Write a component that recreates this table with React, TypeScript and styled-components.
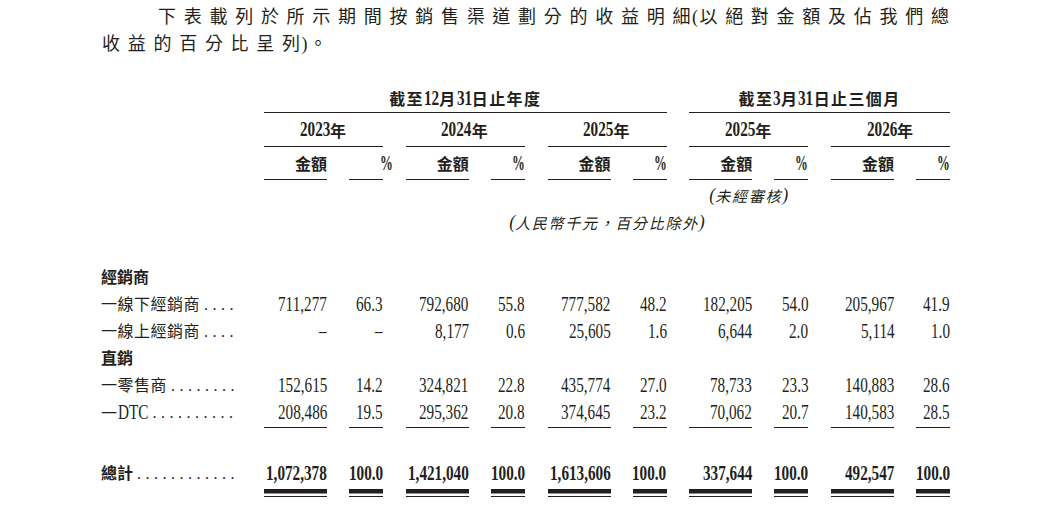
import React from 'react';
import styled, { createGlobalStyle, css } from 'styled-components';

const INK = '#231f20';
const FONT = `"Liberation Serif", "Noto Sans CJK TC", "Noto Sans CJK SC", serif`;

const GlobalStyle = createGlobalStyle`
  html, body { margin: 0; padding: 0; background: #ffffff; }
  body { font-family: ${FONT}; color: ${INK}; }
`;

const Page = styled.main`
  width: 1057px;
  height: 515px;
  box-sizing: border-box;
  padding: 4px 0 0 101px;
  overflow: hidden;
`;

const Intro = styled.p`
  margin: 0;
  padding-left: 1px;
  font-size: 18px;
  line-height: 27px;
  letter-spacing: 7.72px;
  text-indent: 56px;
  white-space: nowrap;
`;

const TightMark = styled.span`
  letter-spacing: 1.5px;
`;

const Table = styled.section`
  margin-top: 26px;
`;

const Row = styled.div<{ $h: number; $mt?: number }>`
  display: grid;
  grid-template-columns: 140.25px repeat(5, 119px);
  column-gap: 22.75px;
  height: ${(p) => p.$h}px;
  margin-top: ${(p) => p.$mt ?? 0}px;
`;

const Blank = styled.div``;

const HeadCell = styled.div<{ $col?: string }>`
  grid-column: ${(p) => p.$col ?? 'auto'};
  box-sizing: border-box;
  border-bottom: 1px solid ${INK};
  display: flex;
  align-items: center;
  justify-content: center;
  font-weight: 700;
  font-size: 16px;
  letter-spacing: 1.4px;
  white-space: nowrap;
`;

const Group = styled.div<{ $top?: boolean }>`
  display: flex;
  justify-content: space-between;
  align-items: ${(p) => (p.$top ? 'flex-start' : 'stretch')};
`;

const SubHead = styled.div<{ $w: number }>`
  width: ${(p) => p.$w}px;
  box-sizing: border-box;
  border-bottom: 1px solid ${INK};
  display: flex;
  align-items: center;
  justify-content: flex-end;
  font-weight: 700;
  font-size: 16px;
`;

const Nudge = styled.span<{ $by: number }>`
  display: inline-flex;
  margin-right: ${(p) => -p.$by}px;
`;

const Note = styled.div<{ $col: string }>`
  grid-column: ${(p) => p.$col};
  display: flex;
  align-items: center;
  justify-content: center;
  font-style: italic;
  font-size: 15px;
  letter-spacing: 1.7px;
  white-space: nowrap;
`;

const Paren = styled.span`
  font-size: 18px;
  letter-spacing: 0;
`;

/* Times-like figures, horizontally condensed as in the printed prospectus */
const Cond = styled.span<{ $em: number; $sx?: number; $bold?: boolean }>`
  display: inline-block;
  font-family: "Liberation Serif", serif;
  font-size: 20px;
  font-weight: ${(p) => (p.$bold ? 700 : 400)};
  font-style: normal;
  letter-spacing: 0;
  transform: scaleX(${(p) => p.$sx ?? 0.76});
  transform-origin: left center;
  margin-right: ${(p) => -(1 - (p.$sx ?? 0.76)) * p.$em}em;
`;

const Label = styled.div<{ $bold?: boolean }>`
  display: flex;
  align-items: flex-start;
  height: 27px;
  line-height: 27px;
  padding-right: 3.75px;
  font-size: 16px;
  font-weight: ${(p) => (p.$bold ? 700 : 400)};
  white-space: nowrap;
`;

const LabelText = styled.span<{ $spaced?: boolean }>`
  letter-spacing: ${(p) => (p.$spaced ? '0.5px' : '0')};
`;

const Leader = styled.span`
  margin-left: auto;
  padding-left: 4px;
  font-family: "Liberation Serif", serif;
  font-size: 16px;
  font-weight: 400;
  letter-spacing: 4.5px;
`;

type Rule = 'single' | 'double' | undefined;

const Fig = styled.div<{ $w: number; $rule?: Rule }>`
  width: ${(p) => p.$w}px;
  height: 27px;
  line-height: 27px;
  display: flex;
  justify-content: flex-end;
  align-items: flex-start;
  ${(p) =>
    p.$rule === 'single' &&
    css`
      padding-bottom: 1px;
      border-bottom: 1px solid ${INK};
    `}
  ${(p) =>
    p.$rule === 'double' &&
    css`
      padding-bottom: 9px;
      border-bottom: 1.3px solid ${INK};
      background: linear-gradient(${INK}, ${INK}) left 0 bottom 3px / 100% 4.5px no-repeat;
    `}
`;

const emOf = (s: string, bold = false) =>
  [...s].reduce((a, c) => {
    if (/[0-9–]/.test(c)) return a + 0.5;
    if (c === ',' || c === '.') return a + 0.25;
    if (c === '%') return a + (bold ? 1 : 0.833);
    return a + 0.6;
  }, 0);

const Num: React.FC<{ v: string; bold?: boolean }> = ({ v, bold }) => (
  <Cond $em={emOf(v, bold)} $bold={bold}>
    {v}
  </Cond>
);

type Line = {
  label: React.ReactNode;
  dots?: number;
  bold?: boolean;
  vals?: [string, string][];
  rule?: Rule;
};

const lines: Line[] = [
  { label: '經銷商', bold: true },
  {
    label: '一線下經銷商',
    dots: 4,
    vals: [
      ['711,277', '66.3'],
      ['792,680', '55.8'],
      ['777,582', '48.2'],
      ['182,205', '54.0'],
      ['205,967', '41.9'],
    ],
  },
  {
    label: '一線上經銷商',
    dots: 4,
    vals: [
      ['–', '–'],
      ['8,177', '0.6'],
      ['25,605', '1.6'],
      ['6,644', '2.0'],
      ['5,114', '1.0'],
    ],
  },
  { label: '直銷', bold: true },
  {
    label: '一零售商',
    dots: 8,
    vals: [
      ['152,615', '14.2'],
      ['324,821', '22.8'],
      ['435,774', '27.0'],
      ['78,733', '23.3'],
      ['140,883', '28.6'],
    ],
  },
  {
    label: (
      <>
        一<Cond $em={2.0}>DTC</Cond>
      </>
    ),
    dots: 10,
    rule: 'single',
    vals: [
      ['208,486', '19.5'],
      ['295,362', '20.8'],
      ['374,645', '23.2'],
      ['70,062', '20.7'],
      ['140,583', '28.5'],
    ],
  },
];

const total: Line = {
  label: '總計',
  dots: 12,
  bold: true,
  rule: 'double',
  vals: [
    ['1,072,378', '100.0'],
    ['1,421,040', '100.0'],
    ['1,613,606', '100.0'],
    ['337,644', '100.0'],
    ['492,547', '100.0'],
  ],
};

const years = ['2023', '2024', '2025', '2025', '2026'];

const DataRow: React.FC<{ line: Line; h: number; mt?: number }> = ({ line, h, mt }) => (
  <Row $h={h} $mt={mt}>
    <Label $bold={line.bold}>
      <LabelText $spaced={!line.bold}>{line.label}</LabelText>
      {line.dots ? <Leader>{'.'.repeat(line.dots)}</Leader> : null}
    </Label>
    {line.vals?.map(([a, p], i) => (
      <Group key={i} $top>
        <Fig $w={63} $rule={line.rule}>
          <Num v={a} bold={line.bold} />
        </Fig>
        <Fig $w={34} $rule={line.rule}>
          <Num v={p} bold={line.bold} />
        </Fig>
      </Group>
    ))}
  </Row>
);

export default function App() {
  return (
    <>
      <GlobalStyle />
      <Page>
        <Intro>
          下表載列於所示期間按銷售渠道劃分的收益明<TightMark>細(</TightMark>以絕對金額及佔我們總
          <br />
          收益的百分比呈<TightMark>列)</TightMark>。
        </Intro>
        <Table>
          <Row $h={29}>
            <Blank />
            <HeadCell $col="2 / span 3">
              截至<Cond $em={1} $bold>12</Cond>月<Cond $em={1} $bold>31</Cond>日止年度
            </HeadCell>
            <HeadCell $col="5 / span 2">
              截至<Cond $em={0.5} $bold>3</Cond>月<Cond $em={1} $bold>31</Cond>日止三個月
            </HeadCell>
          </Row>
          <Row $h={34}>
            <Blank />
            {years.map((y, i) => (
              <HeadCell key={i}>
                <Cond $em={2} $bold>
                  {y}
                </Cond>
                年
              </HeadCell>
            ))}
          </Row>
          <Row $h={33}>
            <Blank />
            {years.map((_, i) => (
              <Group key={i}>
                <SubHead $w={63}>金額</SubHead>
                <SubHead $w={34}>
                  <Nudge $by={i === 0 ? 10 : 0}>
                    <Cond $em={1} $sx={0.64} $bold>
                      %
                    </Cond>
                  </Nudge>
                </SubHead>
              </Group>
            ))}
          </Row>
          <Row $h={30}>
            <Note $col="5 / span 1">
              <Paren>(</Paren>未經審核<Paren>)</Paren>
            </Note>
          </Row>
          <Row $h={24}>
            <Note $col="2 / -1">
              <Paren>(</Paren>人民幣千元，百分比除外<Paren>)</Paren>
            </Note>
          </Row>
          {lines.map((l, i) => (
            <DataRow key={i} line={l} h={l.rule === 'single' ? 29 : 27} mt={i === 0 ? 30 : 0} />
          ))}
          <DataRow line={total} h={38} mt={32} />
        </Table>
      </Page>
    </>
  );
}
